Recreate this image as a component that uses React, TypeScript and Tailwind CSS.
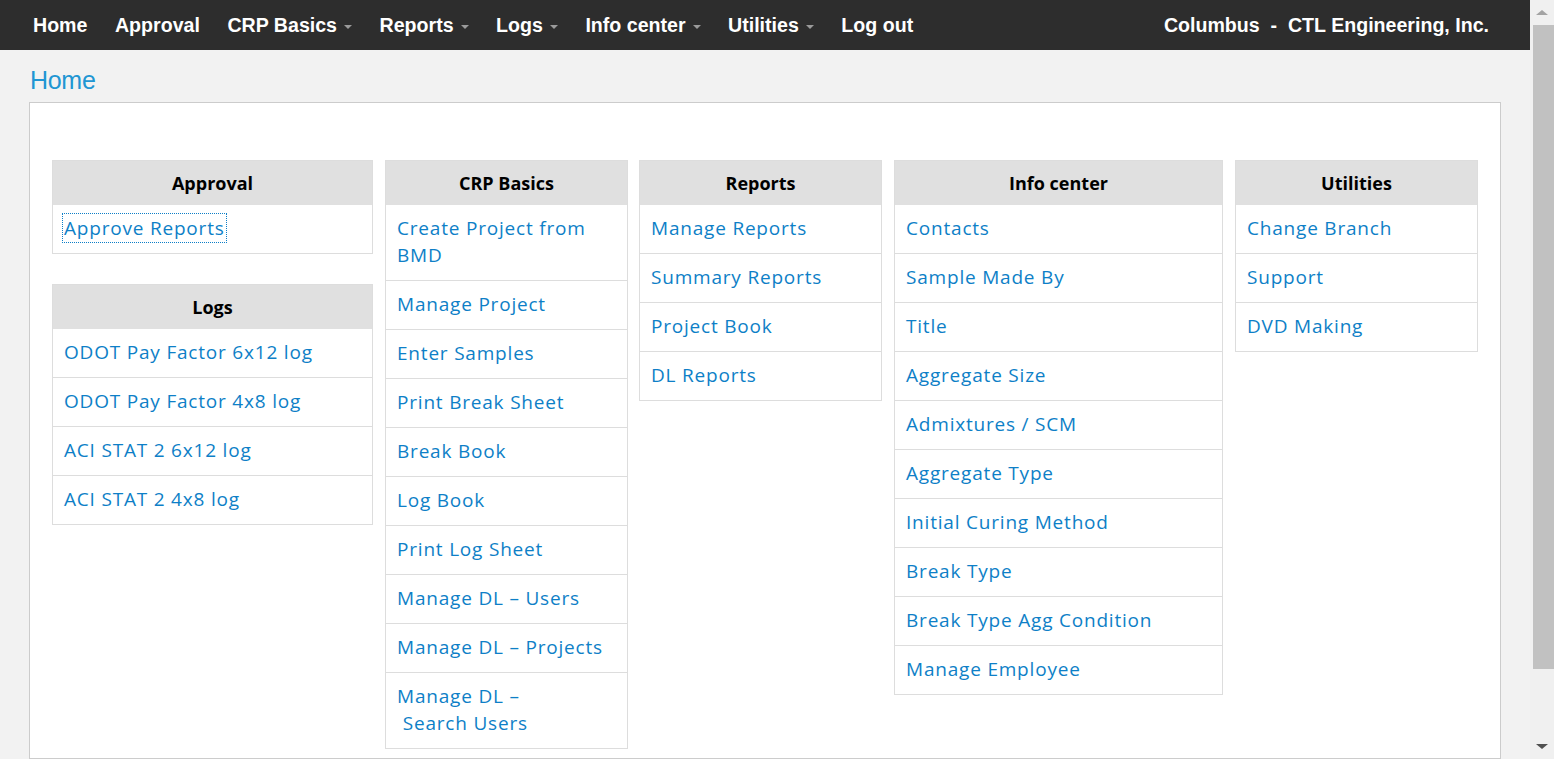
import React from 'react';

type Card = { title: string; items: React.ReactNode[] };

const navItems: { label: string; caret?: boolean }[] = [
    { label: 'Home' },
    { label: 'Approval' },
    { label: 'CRP Basics', caret: true },
    { label: 'Reports', caret: true },
    { label: 'Logs', caret: true },
    { label: 'Info center', caret: true },
    { label: 'Utilities', caret: true },
    { label: 'Log out' },
];

const approval: Card = { title: 'Approval', items: ['Approve Reports'] };
const logs: Card = {
    title: 'Logs',
    items: ['ODOT Pay Factor 6x12 log', 'ODOT Pay Factor 4x8 log', 'ACI STAT 2 6x12 log', 'ACI STAT 2 4x8 log'],
};
const crp: Card = {
    title: 'CRP Basics',
    items: [
        <>Create Project from<br />BMD</>,
        'Manage Project',
        'Enter Samples',
        'Print Break Sheet',
        'Break Book',
        'Log Book',
        'Print Log Sheet',
        'Manage DL – Users',
        'Manage DL – Projects',
        <>Manage DL –<br />{'\u00a0Search Users'}</>,
    ],
};
const reports: Card = { title: 'Reports', items: ['Manage Reports', 'Summary Reports', 'Project Book', 'DL Reports'] };
const info: Card = {
    title: 'Info center',
    items: [
        'Contacts',
        'Sample Made By',
        'Title',
        'Aggregate Size',
        'Admixtures / SCM',
        'Aggregate Type',
        'Initial Curing Method',
        'Break Type',
        'Break Type Agg Condition',
        'Manage Employee',
    ],
};
const utilities: Card = { title: 'Utilities', items: ['Change Branch', 'Support', 'DVD Making'] };

const MenuCard: React.FC<{ card: Card; focusFirst?: boolean }> = ({ card, focusFirst }) => (
    <div className="border border-[#dddddd] bg-white">
        <div className="h-[44px] bg-[#e0e0e0] flex items-center justify-center text-[18px] font-bold text-black">
            {card.title}
        </div>
        {card.items.map((item, i) => (
            <div
                key={i}
                className={`pl-[11px] pr-[10px] pt-[10px] pb-[11px] leading-[27px] text-[19px] text-[#0e7fc7] tracking-[0.8px] ${i > 0 ? 'border-t border-[#dddddd]' : ''}`}
            >
                <a className={focusFirst && i === 0 ? 'outline outline-1 outline-dotted outline-[#0e7fc7] outline-offset-[1px]' : ''}>
                    {item}
                </a>
            </div>
        ))}
    </div>
);

export default function App() {
    return (
        <div className="h-[759px] w-full flex overflow-hidden bg-[#f2f2f2]">
            <div className="flex-1 flex flex-col overflow-hidden">
                <nav className="h-[50px] shrink-0 bg-[#2d2d2d] flex items-center justify-between pt-[2px] pl-[33px] pr-[41px] text-white font-bold text-[19.6px] font-['Liberation_Sans',Arial,sans-serif]">
                    <div className="flex items-center gap-[27.5px]">
                        {navItems.map((n) => (
                            <span key={n.label} className="flex items-center">
                                {n.label}
                                {n.caret && (
                                    <span className="ml-[7px] mt-[3px] w-0 h-0 border-x-[4px] border-t-[4px] border-x-transparent border-t-[#9a9a9a]" />
                                )}
                            </span>
                        ))}
                    </div>
                    <div className="whitespace-pre">Columbus  -  CTL Engineering, Inc.</div>
                </nav>

                <h1 className="h-[52px] shrink-0 pl-[30px] pt-[15px] leading-[30px] text-[25px] tracking-[-0.3px] text-[#2196d3] font-['Liberation_Sans',Arial,sans-serif]">
                    Home
                </h1>

                <div className="ml-[29px] w-[1472px] flex-1 bg-white border border-[#cccccc] pt-[57px] px-[22px] font-['Open_Sans',sans-serif]">
                    <div className="flex items-start gap-[12px]">
                        <div className="w-[321px] flex flex-col gap-[30px]">
                            <MenuCard card={approval} focusFirst />
                            <MenuCard card={logs} />
                        </div>
                        <div className="w-[243px]">
                            <MenuCard card={crp} />
                        </div>
                        <div className="w-[243px] -ml-[1px]">
                            <MenuCard card={reports} />
                        </div>
                        <div className="w-[329px]">
                            <MenuCard card={info} />
                        </div>
                        <div className="w-[243px]">
                            <MenuCard card={utilities} />
                        </div>
                    </div>
                </div>
            </div>

            {/* fake window scrollbar */}
            <div className="w-[24px] shrink-0 bg-[#f0f0f0] flex flex-col items-center">
                <div className="h-[25px] flex items-center justify-center">
                    <span className="w-0 h-0 border-x-[6px] border-b-[5px] border-x-transparent border-b-[#a3a3a3]" />
                </div>
                <div className="w-[21px] ml-[2px] h-[644px] bg-[#c1c1c1]" />
                <div className="flex-1" />
                <div className="h-[25px] flex items-center justify-center">
                    <span className="w-0 h-0 border-x-[6px] border-t-[5px] border-x-transparent border-t-[#505050]" />
                </div>
            </div>
        </div>
    );
}
